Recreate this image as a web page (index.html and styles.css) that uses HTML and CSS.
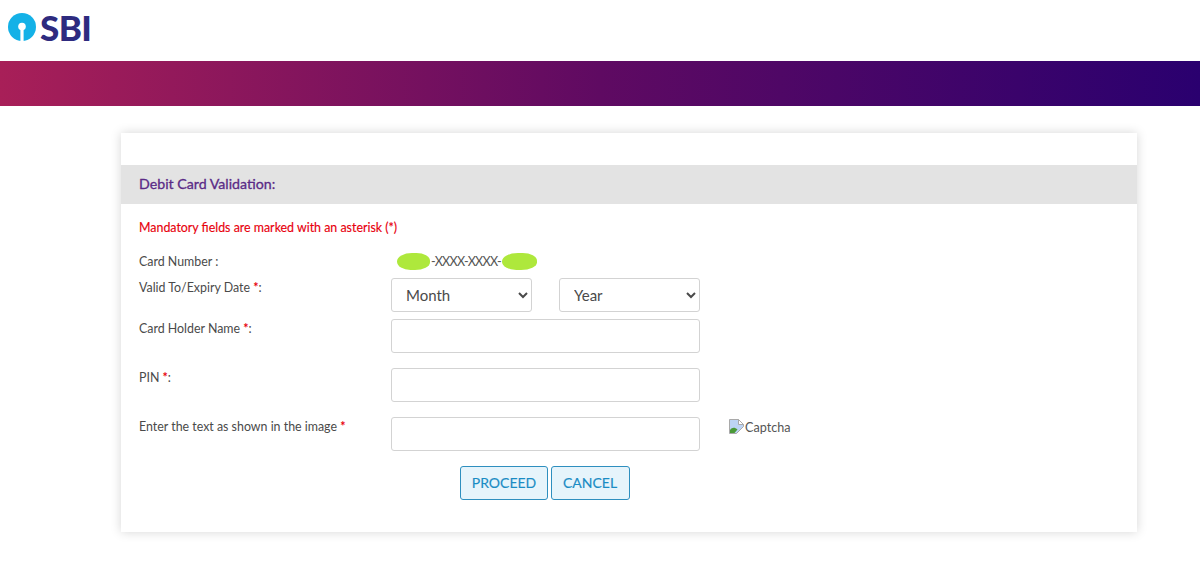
FILE: index.html
```html
<!DOCTYPE html>
<html lang="en">
<head>
<meta charset="utf-8">
<title>Debit Card Validation</title>
<link rel="stylesheet" href="styles.css">
</head>
<body>
<header class="top">
  <svg class="emblem" width="28" height="28" viewBox="0 0 28 28" aria-hidden="true">
    <circle cx="14" cy="14" r="14" fill="#14b1e7"/>
    <circle cx="14" cy="13.5" r="3.8" fill="#fff"/>
    <rect x="12.4" y="14" width="3.2" height="14" fill="#fff"/>
  </svg>
  <span class="brand">SBI</span>
</header>
<div class="band"></div>
<main class="card">
  <h1 class="card-title">Debit Card Validation:</h1>
  <div class="card-body">
    <p class="notice">Mandatory fields are marked with an asterisk (*)</p>
    <div class="row row-number">
      <span class="label">Card Number :</span>
      <span class="masked"><i class="blob blob-a"></i>-XXXX-XXXX-<i class="blob blob-b"></i></span>
    </div>
    <div class="row row-expiry">
      <label class="label">Valid To/Expiry Date <b>*</b>:</label>
      <div class="selects">
        <select class="field select"><option>Month</option></select>
        <select class="field select"><option>Year</option></select>
      </div>
    </div>
    <div class="row row-name">
      <label class="label">Card Holder Name <b>*</b>:</label>
      <input class="field input" type="text">
    </div>
    <div class="row row-gap">
      <label class="label">PIN <b>*</b>:</label>
      <input class="field input" type="text">
    </div>
    <div class="row row-gap">
      <label class="label">Enter the text as shown in the image <b>*</b></label>
      <input class="field input" type="text">
      <span class="captcha">
        <svg class="broken" width="16" height="16" viewBox="0 0 16 16" aria-hidden="true">
          <path d="M0.5 0.5H9.5L14.5 5.5V7.5L7.5 14.5H0.5Z" fill="#bcd4f5" stroke="#a9a9a9"/>
          <path d="M1 14V11C3 8.5 5.5 8 8.5 10.5L5.5 14Z" fill="#4a9a38"/>
          <path d="M9.5 0.5V5.5H14.5Z" fill="#fff" stroke="#a9a9a9"/>
        </svg>Captcha
      </span>
    </div>
    <div class="actions">
      <button class="btn btn-proceed" type="button">PROCEED</button>
      <button class="btn btn-cancel" type="button">CANCEL</button>
    </div>
  </div>
</main>
</body>
</html>
```
FILE: styles.css
```css
* { box-sizing: border-box; }
html, body { margin: 0; padding: 0; }
html, body { min-height: 562px; }
body {
  background: #fff;
  font-family: Lato, "Liberation Sans", sans-serif;
  font-size: 12.4px;
  color: #4a4a4a;
}
.top {
  height: 61px;
  padding: 13px 0 0 8px;
  display: flex;
  align-items: flex-start;
}
.emblem { display: block; flex: none; }
.brand {
  margin-left: 4px;
  font-family: Lato, sans-serif;
  font-weight: 900;
  font-size: 35px;
  line-height: 29px;
  letter-spacing: -0.6px;
  color: #2e2b7f;
}
.band {
  height: 45px;
  background: linear-gradient(90deg, #a81f58 0%, #5f0a62 50%, #2a006f 100%);
}
.card {
  width: 1016px;
  height: 399px;
  margin: 27px 0 0 121px;
  padding-top: 32px;
  background: #fff;
  box-shadow: 0 0 10px rgba(0, 0, 0, 0.17);
}
.card-title {
  margin: 0;
  height: 39px;
  padding-left: 18px;
  background: #e3e3e3;
  color: #5a2a86;
  font-size: 14.2px;
  font-weight: 400;
  -webkit-text-stroke: 0.3px #5a2a86;
  line-height: 38px;
}
.card-body { padding: 0 18px; }
.notice {
  margin: 0;
  padding-top: 16px;
  height: 46px;
  color: #e8000d;
  font-size: 12.4px;
  line-height: 16px;
  -webkit-text-stroke: 0.15px #e8000d;
}
.row {
  display: grid;
  grid-template-columns: 252px 309px auto;
  align-items: start;
}
.label { display: block; line-height: 16px; padding-top: 2px; }
.label b { color: #e8000d; font-weight: 700; }
.row-number { height: 28px; padding-top: 3px; }
.row-number .label { padding-top: 1px; }
.masked {
  display: flex;
  align-items: center;
  height: 17px;
  padding-left: 6px;
  font-size: 12.6px;
  letter-spacing: -0.75px;
  color: #555;
}
.blob {
  display: block;
  height: 17px;
  background: #aee83c;
  border-radius: 50% 45% 50% 45% / 55% 50% 50% 55%;
  filter: blur(0.6px);
}
.blob-a { width: 33px; margin-right: 1px; }
.blob-b { width: 35px; margin-left: 1px; }
.row-expiry { height: 41px; }
.row-expiry .label { padding-top: 2px; }
.row-name { height: 49px; }
.row-gap { height: 49px; }
.selects { display: flex; justify-content: space-between; }
.field {
  display: block;
  height: 34px;
  border: 1px solid #d3d3d3;
  border-radius: 3px;
  background: #fff;
  font-family: inherit;
  font-size: 15px;
  color: #4a4a4a;
}
.select { width: 141px; padding-left: 10px; }
.input { width: 309px; }
.captcha {
  display: flex;
  align-items: center;
  margin-left: 29px;
  margin-top: 2px;
  font-size: 12.6px;
  color: #555;
}
.broken { flex: none; }
.actions {
  display: flex;
  justify-content: flex-start;
  gap: 3px;
  padding-left: 321px;
}
.btn {
  height: 34px;
  border: 1px solid #2e8fbf;
  border-radius: 3px;
  background: #e6f4fb;
  color: #1a8cc4;
  font-family: inherit;
  font-size: 14px;
  padding: 0 0 2px;
  -webkit-text-stroke: 0.15px #1a8cc4;
}
.btn-proceed { width: 88px; }
.btn-cancel { width: 79px; padding-right: 1px; }
```
